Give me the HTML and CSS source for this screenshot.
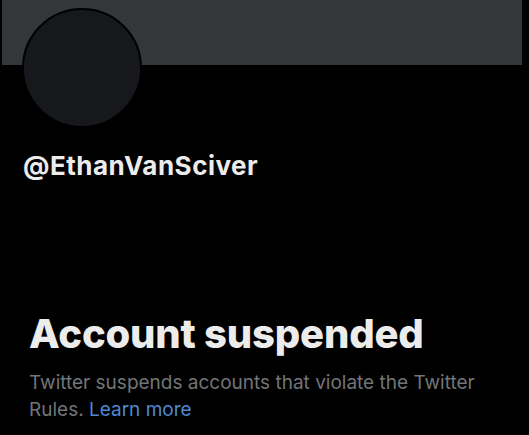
FILE: index.html
```html
<!DOCTYPE html>
<html lang="en">
<head>
    <meta charset="UTF-8">
    <meta name="viewport" content="width=device-width, initial-scale=1.0">
    <title>Account suspended</title>
    <link rel="stylesheet" href="styles.css">
</head>
<body>
    <header class="profile">
        <div class="banner"></div>
        <div class="avatar"></div>
        <h1 class="handle">@EthanVanSciver</h1>
    </header>
    <main class="notice">
        <h2>Account suspended</h2>
        <p>Twitter suspends accounts that violate the Twitter Rules. <a href="#">Learn more</a></p>
    </main>
</body>
</html>
```

FILE: styles.css
```css
/* reset */
* {box-sizing: border-box;}
body, h1, h2, p {margin: 0; padding: 0;}
a {text-decoration: none;}
body {
    background: #000;
    color: #e7e9ea;
    font-family: Inter, "Liberation Sans", sans-serif;
    height: 435px;
    overflow: hidden;
}
/* profile */
.profile {display: flex; flex-direction: column;}
.banner {height: 65px; margin: 0 7px 0 2px; background: #33373a;}
.avatar {
    width: 120px; height: 120px;
    margin: -57px 0 0 22px;
    border: 2px solid #000;
    border-radius: 50%;
    background: #17181c;
}
.handle {margin: 23px 0 0 23px; font-size: 26px; font-weight: 700; line-height: 30px; color: #ececec; letter-spacing: 0.5px;}
/* notice */
.notice {padding: 129px 40px 0 29px;}
.notice h2 {font-size: 40px; font-weight: 800; line-height: 48px; color: #ececec; letter-spacing: -0.2px;}
.notice p {margin-top: 11px; font-size: 19px; line-height: 27px; color: #727578;}
.notice p a {color: #4b8ad0;}
```
